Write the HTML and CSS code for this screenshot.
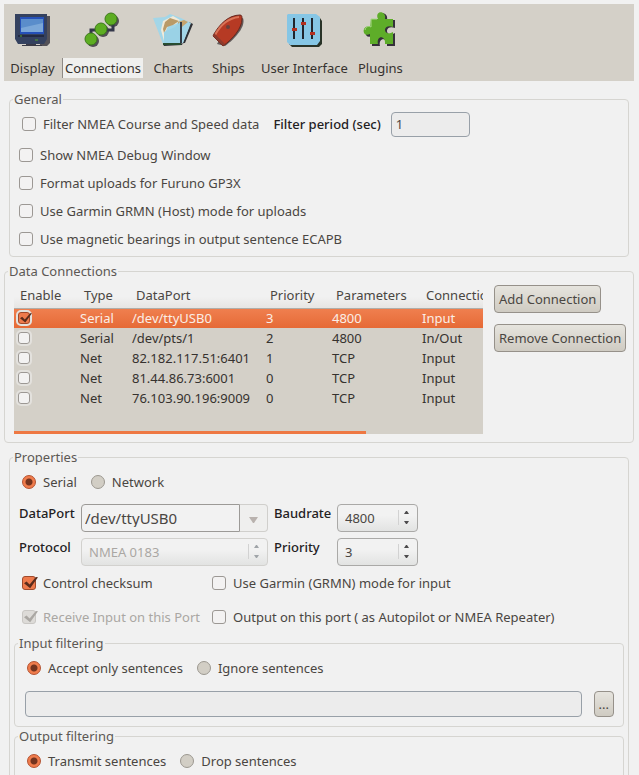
FILE: index.html
```html
<!DOCTYPE html>
<html lang="en">
<head>
<meta charset="utf-8">
<title>Options</title>
<link rel="stylesheet" href="styles.css">
</head>
<body>
<main class="dialog">
  <nav class="toolbar">
    <button class="tab" type="button">
      <svg class="icon" viewBox="0 0 40 40" aria-hidden="true">
        <path d="M6 6h32v27l-3 3h-7v-2H9z" fill="#2a2833" opacity=".75"/>
        <path d="M3 4h32v25l-3 5H6l-3-5z" fill="#34415f"/>
        <path d="M8 7h24v17H8z" fill="#2450b8"/>
        <path d="M9 9h22v13H9z" fill="#7ba7d8"/>
        <path d="M9 9h22v4L9 18z" fill="#5a8dcb"/>
        <path d="M6 26h26" stroke="#232a42" stroke-width="2"/>
        <path d="M8 26h2M23 30h3" stroke="#58a52a"/>
        <path d="M14 34h10v1h6v1H10v-1h4z" fill="#3a3a46"/>
      </svg>
      <span class="tab-label">Display</span>
    </button>
    <button class="tab tab-active" type="button">
      <svg class="icon" viewBox="0 0 40 40" aria-hidden="true">
        <g fill="#33303a" opacity=".8"><circle cx="31" cy="11" r="6"/><circle cx="21" cy="21" r="6"/><circle cx="11" cy="31" r="6"/></g>
        <path d="M9 28V20h11M19 20h12v-8" fill="none" stroke="#34374a" stroke-width="3"/>
        <g fill="#5dad22" stroke="#3d7a1c"><circle cx="29" cy="9" r="6"/><circle cx="19" cy="19" r="6"/><circle cx="9" cy="29" r="6"/></g>
      </svg>
      <span class="tab-label">Connections</span>
    </button>
    <button class="tab" type="button">
      <svg class="icon" viewBox="0 0 40 40" aria-hidden="true">
        <path d="M10 34l22-1 8-19-4-2v5l-7 18-18 1z" fill="#2e3036"/>
        <path d="M0 8l12-1 5-3 11 4 10 5-8 20-20 1z" fill="#a3d6e8"/>
        <path d="M8 20l2-9 10-5 7 4-4 4-8 2-3 7-1 8z" fill="#f1ead8"/>
        <path d="M12 12l5-4 9 3-6 4-6 2-3 6-1-4z" fill="#b99a68"/>
        <path d="M25 12l6-2 4 2-5 4-4 4z" fill="#c5a36d"/>
        <path d="M11 22l11-5 5-5 1 21-17 1z" fill="#9ad2e6"/>
        <path d="M28 12v21" stroke="#343c46" stroke-width="2"/>
        <path d="M10 34h18" stroke="#284c30" stroke-width="2"/>
      </svg>
      <span class="tab-label">Charts</span>
    </button>
    <button class="tab" type="button">
      <svg class="icon" viewBox="0 0 40 40" aria-hidden="true">
        <path d="M9 34C15 22 24 13 35 8c3 8-7 20-18 28z" fill="#3c3436" opacity=".75"/>
        <path d="M5 26C11 14 21 5 32 5c2 0 2 2 2 4 0 9-9 20-19 27z" fill="#b63a24" stroke="#65251d"/>
        <path d="M7 25C13 14 21 8 31 7" fill="none" stroke="#d97458" stroke-width="2"/>
        <path d="M5 26l10 10 2-2L6 23z" fill="#8c3a2d"/>
        <circle cx="20" cy="17" r="2" fill="#68413d"/>
      </svg>
      <span class="tab-label">Ships</span>
    </button>
    <button class="tab" type="button">
      <svg class="icon" viewBox="0 0 40 40" aria-hidden="true">
        <path d="M5 8h31l2 3v23l-3 3H8l-3-3z" fill="#293328"/>
        <path d="M4 4h28l4 3v24l-3 4H6l-3-3V5z" fill="#86c6e5"/>
        <path d="M10 8v21M19 8v21M28 8v21" stroke="#20252d" stroke-width="2"/>
        <rect x="8" y="18" width="5" height="3" fill="#b4301f"/><rect x="17" y="12" width="5" height="3" fill="#b4301f"/><rect x="26" y="22" width="5" height="3" fill="#b4301f"/>
      </svg>
      <span class="tab-label">User Interface</span>
    </button>
    <button class="tab" type="button">
      <svg class="icon" viewBox="0 0 40 40" aria-hidden="true">
        <path transform="translate(2 1)" d="M11 9h7c-4-9 9-9 7 0h8v8c-8-3-10 4-6 6 2 1 4 0 6-1v13h-8c1-9-9-9-7 0h-8v-10c-8 4-9-9 0-8z" fill="#35303a"/>
        <path d="M11 9h7c-4-9 9-9 7 0h8v8c-8-3-10 4-6 6 2 1 4 0 6-1v12h-8c1-9-9-9-7 0h-8V24c-8 4-9-9 0-8z" fill="#5ead29"/>
        <path d="M5 20c1-4 4-4 6-3V9h6" fill="none" stroke="#a9d78a"/>
      </svg>
      <span class="tab-label">Plugins</span>
    </button>
  </nav>

  <fieldset class="group inset">
    <legend>General</legend>
    <div class="filter-row">
      <label class="choice"><input class="box" type="checkbox">Filter NMEA Course and Speed data</label>
      <label class="strong" for="period">Filter period (sec)</label>
      <input class="field period" id="period" type="text" value="1">
    </div>
    <div class="stack">
      <label class="choice"><input class="box" type="checkbox">Show NMEA Debug Window</label>
      <label class="choice"><input class="box" type="checkbox">Format uploads for Furuno GP3X</label>
      <label class="choice"><input class="box" type="checkbox">Use Garmin GRMN (Host) mode for uploads</label>
      <label class="choice"><input class="box" type="checkbox">Use magnetic bearings in output sentence ECAPB</label>
    </div>
  </fieldset>

  <fieldset class="group">
    <legend>Data Connections</legend>
    <div class="connections">
      <div class="list">
        <table class="ports">
          <colgroup><col class="c-enable"><col class="c-type"><col class="c-port"><col class="c-priority"><col class="c-wide"><col class="c-wide"></colgroup>
          <thead>
            <tr><th>Enable</th><th>Type</th><th>DataPort</th><th>Priority</th><th>Parameters</th><th>Connection</th></tr>
          </thead>
          <tbody>
            <tr class="selected"><td><input class="box small" type="checkbox" aria-label="Enable /dev/ttyUSB0" checked></td><td>Serial</td><td>/dev/ttyUSB0</td><td>3</td><td>4800</td><td>Input</td></tr>
            <tr><td><input class="box small" type="checkbox" aria-label="Enable /dev/pts/1"></td><td>Serial</td><td>/dev/pts/1</td><td>2</td><td>4800</td><td>In/Out</td></tr>
            <tr><td><input class="box small" type="checkbox" aria-label="Enable 82.182.117.51:6401"></td><td>Net</td><td>82.182.117.51:6401</td><td>1</td><td>TCP</td><td>Input</td></tr>
            <tr><td><input class="box small" type="checkbox" aria-label="Enable 81.44.86.73:6001"></td><td>Net</td><td>81.44.86.73:6001</td><td>0</td><td>TCP</td><td>Input</td></tr>
            <tr><td><input class="box small" type="checkbox" aria-label="Enable 76.103.90.196:9009"></td><td>Net</td><td>76.103.90.196:9009</td><td>0</td><td>TCP</td><td>Input</td></tr>
          </tbody>
        </table>
        <div class="scroll"><div class="thumb"></div></div>
      </div>
      <div class="actions">
        <button class="btn" type="button">Add Connection</button>
        <button class="btn" type="button">Remove Connection</button>
      </div>
    </div>
  </fieldset>

  <fieldset class="group inset">
    <legend>Properties</legend>
    <div class="radios">
      <label class="choice"><input class="radio" type="radio" name="kind" checked>Serial</label>
      <label class="choice"><input class="radio" type="radio" name="kind">Network</label>
    </div>
    <div class="settings">
      <label class="strong" for="port">DataPort</label>
      <div class="combo">
        <input class="combo-text" id="port" type="text" value="/dev/ttyUSB0">
        <button class="combo-button" type="button" aria-label="Show ports"><svg width="9" height="6" viewBox="0 0 9 6"><path d="M0 0h9L5 6H4z" fill="#b9b2ae"/></svg></button>
      </div>
      <label class="strong" for="baud">Baudrate</label>
      <div class="pick">
        <select id="baud"><option>4800</option></select>
        <svg class="arrows" viewBox="0 0 7 15"><path d="M1 4l2-3h1l2 3zM1 11h5l-2 3H3z"/></svg>
      </div>
      <label class="strong" for="protocol">Protocol</label>
      <div class="pick pick-off">
        <select id="protocol" disabled><option>NMEA 0183</option></select>
        <svg class="arrows" viewBox="0 0 7 15"><path d="M1 4l2-3h1l2 3zM1 11h5l-2 3H3z"/></svg>
      </div>
      <label class="strong" for="priority">Priority</label>
      <div class="pick">
        <select id="priority"><option>3</option></select>
        <svg class="arrows" viewBox="0 0 7 15"><path d="M1 4l2-3h1l2 3zM1 11h5l-2 3H3z"/></svg>
      </div>
    </div>
    <div class="flags">
      <label class="choice"><input class="box" type="checkbox" checked>Control checksum</label>
      <label class="choice"><input class="box" type="checkbox">Use Garmin (GRMN) mode for input</label>
      <label class="choice off"><input class="box" type="checkbox" checked disabled>Receive Input on this Port</label>
      <label class="choice"><input class="box" type="checkbox">Output on this port ( as Autopilot or NMEA Repeater)</label>
    </div>
    <fieldset class="group nested">
      <legend>Input filtering</legend>
      <div class="radios">
        <label class="choice"><input class="radio" type="radio" name="in" checked>Accept only sentences</label>
        <label class="choice"><input class="radio" type="radio" name="in">Ignore sentences</label>
      </div>
      <div class="sentences">
        <input class="field grow" type="text" aria-label="Input sentences">
        <button class="btn more" type="button">...</button>
      </div>
    </fieldset>
    <fieldset class="group nested">
      <legend>Output filtering</legend>
      <div class="radios">
        <label class="choice"><input class="radio" type="radio" name="out" checked>Transmit sentences</label>
        <label class="choice"><input class="radio" type="radio" name="out">Drop sentences</label>
      </div>
    </fieldset>
  </fieldset>
</main>
</body>
</html>
```
FILE: styles.css
```css
* {
  box-sizing: border-box;
}

body {
  margin: 0;
  background: #f1f1f1;
  color: #4a4642;
  font: 13px/18px "Noto Sans", "Open Sans", sans-serif;
}

button,
input,
select {
  margin: 0;
  font: inherit;
  color: inherit;
}

.dialog {
  height: 100vh;
  overflow: hidden;
  padding: 4px 5px 0 4px;
}

/* Toolbar */
.toolbar {
  display: flex;
  gap: 5px;
  padding: 6px 3px 3px;
  background: #d4d0c8;
}

.tab {
  display: flex;
  flex-direction: column;
  align-items: center;
  gap: 8px;
  min-width: 50px;
  padding: 0;
  border: 0;
  background: none;
  color: #36322f;
}

.icon {
  width: 40px;
  height: 40px;
}

.tab-label {
  height: 20px;
  padding: 1px 2px 0;
  border-left: 1px solid transparent;
  white-space: nowrap;
}

.tab-active .tab-label {
  border-color: #8e8a85;
  background: #f0f0ee;
}

/* Groups */
.group {
  min-width: 0;
  margin: 5px 0 0;
  padding: 0 9px 3px;
  border: 1px solid #d6d5d1;
  border-radius: 4px;
}

.inset {
  margin: 5px 5px 0;
}

.toolbar + .group {
  margin-top: 9px;
}

legend {
  margin-left: -6px;
  padding: 0 1px;
  color: #5c5854;
}

.choice {
  display: flex;
  align-items: center;
  gap: 7px;
  white-space: nowrap;
}

.off {
  color: #aaa7a3;
}

.strong {
  color: #24211f;
  font-weight: 500;
  white-space: nowrap;
}

.filter-row {
  display: flex;
  align-items: center;
  height: 32px;
  margin-bottom: 1px;
  padding-left: 3px;
}

.filter-row .strong {
  margin: 0 10px 0 14px;
}

.stack {
  display: grid;
  grid-auto-rows: 28px;
}

/* Form controls */
.box {
  appearance: none;
  position: relative;
  flex: none;
  width: 14px;
  height: 14px;
  border: 1px solid #9c9894;
  border-radius: 3px;
  background: #f3f2f2;
}

.box:checked {
  border-color: #a04a2c;
  background: #ee7a4c;
}

.box:checked::before {
  content: "";
  position: absolute;
  inset: -1px -3px 0 1px;
  background: #5a2c1c;
  clip-path: polygon(0 55%, 18% 42%, 40% 66%, 85% 8%, 100% 10%, 44% 94%);
}

.box:disabled {
  border-color: #c9c7c4;
  background: #dddbd8;
}

.box:disabled::before {
  background: #aaa7a3;
}

.small {
  display: block;
  width: 12px;
  height: 12px;
  outline: 2px solid #e3e1dd;
}

.radio {
  appearance: none;
  flex: none;
  width: 14px;
  height: 14px;
  border: 1px solid #9c9890;
  border-radius: 50%;
  background: #d2cec5;
}

.radio:checked {
  border-color: #b4512f;
  background: radial-gradient(circle, #74341f 0 3px, #f07c4c 4px);
}

.radios {
  display: flex;
  align-items: center;
  gap: 14px;
  height: 32px;
  padding-left: 3px;
}

.field {
  height: 26px;
  padding: 0 4px;
  border: 1px solid #98a0a8;
  border-radius: 4px;
  background: #ececec;
}

.period {
  width: 79px;
  height: 25px;
}

.btn {
  height: 28px;
  padding: 0 5px;
  border: 1px solid #96918a;
  border-radius: 4px;
  background: linear-gradient(#e6e4de, #cfcbc2);
  white-space: nowrap;
}

/* Connection list */
.connections {
  display: flex;
  gap: 11px;
  padding-bottom: 5px;
}

.list {
  display: flex;
  flex: 1;
  flex-direction: column;
  min-width: 0;
  height: 154px;
  overflow: hidden;
  background: #d4d0c8;
  color: #36322f;
}

.ports {
  width: 494px;
  border-collapse: collapse;
  table-layout: fixed;
}

.c-enable {
  width: 62px;
}

.c-type {
  width: 52px;
}

.c-port {
  width: 134px;
}

.c-priority {
  width: 66px;
}

.c-wide {
  width: 90px;
}

.ports th {
  height: 28px;
  padding: 2px 0 0 8px;
  border-bottom: 1px solid #b0ada8;
  background: linear-gradient(#f1f1f1 60%, #e6e5e3);
  color: #4a4642;
  font-weight: 400;
  text-align: left;
}

.ports th:first-child {
  padding-left: 6px;
}

.ports td {
  height: 20px;
  padding: 0 4px;
  white-space: nowrap;
}

.selected {
  background: linear-gradient(#f08050, #e66a36);
  color: #fbeee6;
}

.scroll {
  margin-top: auto;
}

.thumb {
  width: 75%;
  height: 3px;
  background: #ee7843;
}

.actions {
  display: flex;
  flex-direction: column;
  align-items: flex-start;
  gap: 11px;
  width: 130px;
  padding-top: 5px;
}

.actions .btn {
  padding: 0 4px;
}

/* Properties */
.settings {
  display: grid;
  grid-template-columns: 56px 187px 57px 81px;
  gap: 6px;
  padding-top: 6px;
}

.combo {
  display: flex;
  height: 28px;
}

.combo-text {
  flex: 1;
  min-width: 0;
  padding: 0 3px;
  border: 1px solid #9c9a97;
  border-radius: 4px 0 0 4px;
  background: #f2f2f2;
  font-size: 15px;
}

.combo-button {
  width: 28px;
  padding: 0;
  border: 1px solid #d0cfcc;
  border-left: 0;
  border-radius: 0 4px 4px 0;
  background: #efefee;
}

.pick {
  position: relative;
  height: 28px;
}

.pick select {
  appearance: none;
  width: 100%;
  height: 100%;
  padding: 0 7px;
  border: 1px solid #aaa9a7;
  border-radius: 4px;
  background: linear-gradient(#f2f2f2 40%, #e2e3e2);
}

.arrows {
  position: absolute;
  top: 6px;
  right: 4px;
  width: 16px;
  height: 15px;
  border-left: 1px solid #d2d2d2;
  fill: #4d4b4d;
}

.pick-off select {
  border-color: #d2d1ce;
  color: #aaa7a3;
  opacity: 1;
}

.pick-off .arrows {
  fill: #a0a4a8;
}

.flags {
  display: grid;
  grid-template-columns: 190px 1fr;
  grid-auto-rows: 34px;
  padding-left: 3px;
}

.nested {
  margin: 0 -5px;
  padding: 0 9px 9px;
}

.nested .radios {
  padding-left: 3px;
}

.nested + .nested {
  margin-top: 0;
}

.sentences {
  display: flex;
  gap: 12px;
  padding: 7px 0 0 1px;
}

.grow {
  flex: 1;
  min-width: 0;
}

.more {
  height: 26px;
  padding: 0 4px;
}
```
